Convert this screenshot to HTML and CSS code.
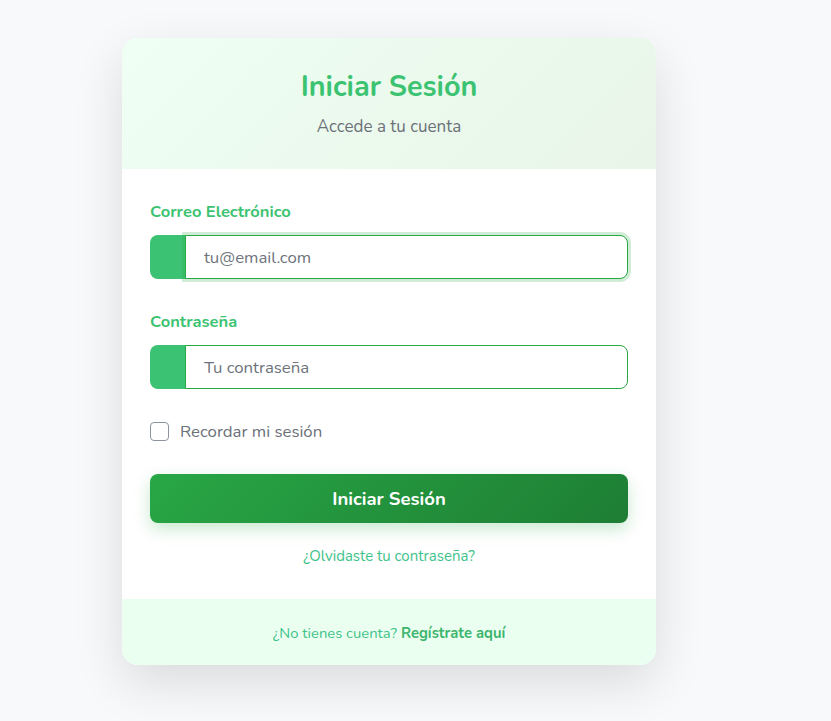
FILE: index.html
```html
<!DOCTYPE html>
<html lang="es">
<head>
<meta charset="utf-8">
<title>Iniciar Sesión</title>
<link rel="stylesheet" href="styles.css">
</head>
<body>
<main class="page">
  <section class="card">
    <header class="card-header">
      <h1 class="title">Iniciar Sesión</h1>
      <p class="subtitle">Accede a tu cuenta</p>
    </header>
    <form class="card-body">
      <div class="field">
        <label class="label" for="email">Correo Electrónico</label>
        <div class="input-group">
          <span class="addon"></span>
          <input class="input input-focus" id="email" type="email" placeholder="tu@email.com">
        </div>
      </div>
      <div class="field">
        <label class="label" for="pass">Contraseña</label>
        <div class="input-group">
          <span class="addon"></span>
          <input class="input" id="pass" type="password" placeholder="Tu contraseña">
        </div>
      </div>
      <label class="check-row">
        <span class="checkbox"></span>
        <span class="check-text">Recordar mi sesión</span>
      </label>
      <button class="btn" type="button">Iniciar Sesión</button>
      <a class="forgot" href="#">¿Olvidaste tu contraseña?</a>
    </form>
    <footer class="card-footer">
      ¿No tienes cuenta? <a class="register" href="#">Regístrate aquí</a>
    </footer>
  </section>
</main>
</body>
</html>
```

FILE: styles.css
```css
* { box-sizing: border-box; }
html, body { margin: 0; padding: 0; }
body {
  background: #f8f9fb;
  font-family: "Nunito", "Lato", "Noto Sans", sans-serif;
  width: 831px;
  height: 721px;
  overflow: hidden;
}
.page {
  padding: 38px 0 0 122px;
}
.card {
  width: 534px;
  background: #fff;
  border-radius: 16px;
  overflow: hidden;
  box-shadow: 0 18px 50px rgba(0, 0, 0, 0.12);
}
.card-header {
  height: 131px;
  background: linear-gradient(135deg, #effff3 0%, #e8f5e8 100%);
  text-align: center;
  padding-top: 31px;
}
.title {
  margin: 0;
  font-size: 28.8px;
  line-height: 36px;
  font-weight: 700;
  color: #3cc372;
}
.subtitle {
  margin: 11px 0 0;
  font-size: 17px;
  line-height: 22px;
  color: #6b7079;
}
.card-body {
  padding: 31px 28px 32px;
  display: flex;
  flex-direction: column;
}
.field {
  display: flex;
  flex-direction: column;
  margin-bottom: 31px;
}
.label {
  font-size: 16.5px;
  line-height: 24px;
  font-weight: 700;
  color: #3cc372;
  margin-bottom: 11px;
}
.input-group {
  display: flex;
  height: 44px;
}
.addon {
  width: 36px;
  background: #3bc273;
  border-radius: 8px 0 0 8px;
  margin-right: -1px;
}
.input {
  flex: 1;
  height: 44px;
  border: 1px solid #28a745;
  border-radius: 0 8px 8px 0;
  padding: 0 18px;
  font-family: inherit;
  font-size: 16.8px;
  color: #333;
  background: #fff;
  outline: none;
}
.input::placeholder { color: #6e737c; }
.input-focus {
  box-shadow: 0 0 0 3px rgba(40, 167, 69, 0.22);
}
.check-row {
  display: flex;
  align-items: center;
  gap: 11px;
  height: 22px;
}
.checkbox {
  width: 19px;
  height: 19px;
  border: 1px solid #8d939c;
  border-radius: 4px;
  background: #fff;
}
.check-text {
  font-size: 16.8px;
  color: #6b7079;
}
.btn {
  margin-top: 32px;
  height: 49px;
  border: 0;
  border-radius: 8px;
  background: linear-gradient(135deg, #28a745 0%, #1e7e34 100%);
  color: #fff;
  font-family: inherit;
  font-size: 18.5px;
  font-weight: 700;
  box-shadow: 0 6px 16px rgba(40, 167, 69, 0.25);
}
.forgot {
  margin-top: 22px;
  text-align: center;
  font-size: 15px;
  line-height: 22px;
  color: #3ec28a;
  text-decoration: none;
}
.card-footer {
  height: 66px;
  background: #eafff0;
  display: flex;
  align-items: center;
  justify-content: center;
  gap: 4px;
  font-size: 14.8px;
  padding-top: 2px;
  color: #3ec28a;
}
.register {
  font-weight: 700;
  color: #3cb56e;
  text-decoration: none;
}
```
